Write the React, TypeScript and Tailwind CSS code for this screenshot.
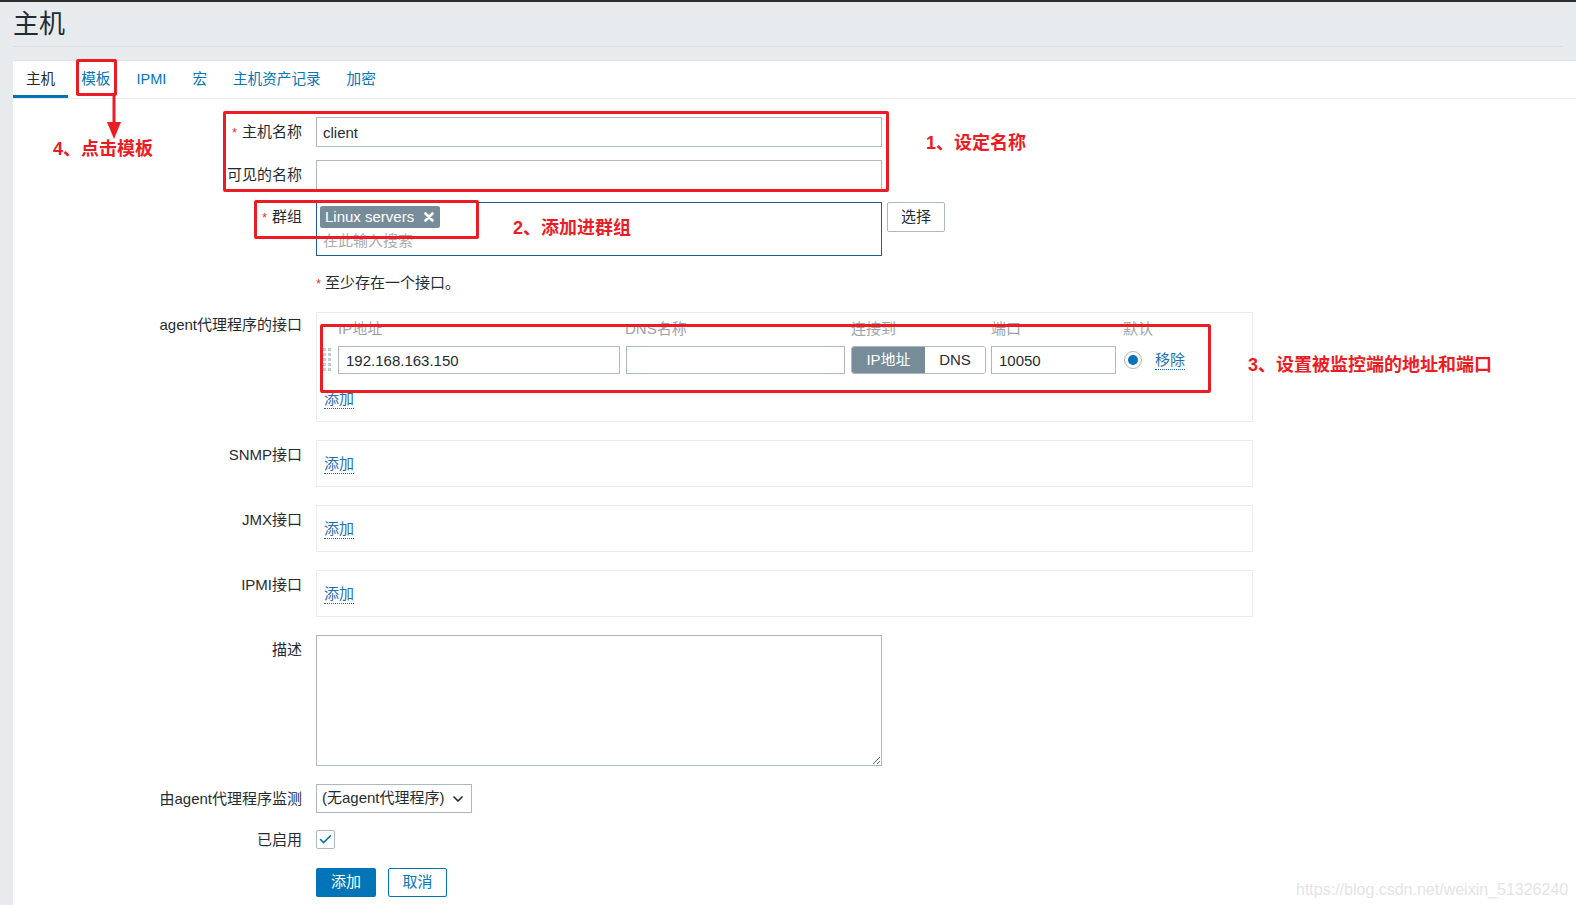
import { Check, ChevronDown } from "lucide-react"

const FONT = { fontFamily: '"Liberation Sans", "Noto Sans CJK SC", sans-serif' }

const tabs = ["主机", "模板", "IPMI", "宏", "主机资产记录", "加密"]

const AddLink = ({ className = "" }: { className?: string }) => (
    <span className={`inline-block text-[15px] leading-[19px] text-[#1f6fb3] border-b border-dotted border-[#1f6fb3] ${className}`}>
        添加
    </span>
)

const Label = ({ text, required, lh = "leading-[30px]" }: { text: string; required?: boolean; lh?: string }) => (
    <div className={`w-[289px] shrink-0 text-right text-[15px] ${lh} text-[#1f2c33]`}>
        {required && <span className="text-[#e33734] mr-[5px] text-[13px]">*</span>}
        {text}
    </div>
)

const DragHandle = () => (
    <svg width="8" height="24" viewBox="0 0 8 24" className="shrink-0">
        {[0, 5, 10, 15, 20].map((y) => (
            <g key={y} fill="#c3ccd2">
                <rect x="0" y={y} width="3" height="3" />
                <rect x="5" y={y} width="3" height="3" />
            </g>
        ))}
    </svg>
)

const EmptyIface = ({ label }: { label: string }) => (
    <div className="flex mt-[18px]">
        <Label text={label} />
        <div className="ml-[14px] w-[937px] h-[47px] border border-[#ebebeb] pl-[7px] pt-[12px]">
            <AddLink />
        </div>
    </div>
)

// red annotation overlays
const RedBox = ({ className }: { className: string }) => (
    <div className={`absolute border-[3px] border-[#ec1c24] rounded-[2px] pointer-events-none ${className}`} />
)

const Note = ({ text, className }: { text: string; className: string }) => (
    <div className={`absolute text-[18px] font-bold leading-[22px] text-[#ec1c24] whitespace-nowrap ${className}`}>{text}</div>
)

export default function App() {
    return (
        <div className="relative w-[1576px] h-[905px] overflow-hidden bg-[#e8ebee] border-t-2 border-[#2b2b2b]" style={FONT}>
            {/* page title */}
            <div className="mx-[13px] h-[45px] border-b border-[#dcdfe2] flex items-center">
                <h1 className="text-[26px] leading-[30px] text-[#1f2c33]">主机</h1>
            </div>

            <div className="mt-[13px] ml-[13px] bg-white border-t border-[#dfe3e6] h-[900px]">
                {/* tabs */}
                <div className="flex h-[38px] border-b border-[#ebebeb]">
                    {tabs.map((t, i) => (
                        <div
                            key={t}
                            className={`px-[13px] h-full flex items-center text-[14.6px] ${
                                i === 0 ? "text-[#1f2c33] border-b-[3px] border-[#0275b8] pt-[4px]" : "text-[#0275b8] pt-[1px]"
                            }`}
                        >
                            {t}
                        </div>
                    ))}
                </div>

                {/* form */}
                <div className="pt-[18px] text-[15px] text-[#1f2c33]">
                    <div className="flex">
                        <Label text="主机名称" required />
                        <input
                            readOnly
                            defaultValue="client"
                            className="ml-[14px] w-[566px] h-[30px] border border-[#acb8c0] px-[6px] text-[15px] text-[#1f2c33] outline-none"
                        />
                    </div>
                    <div className="flex mt-[12px]">
                        <Label text="可见的名称" />
                        <input readOnly className="ml-[14px] w-[566px] h-[30px] border border-[#acb8c0] px-[6px] outline-none" />
                    </div>
                    <div className="flex mt-[12px]">
                        <Label text="群组" required />
                        <div className="ml-[14px] w-[566px] h-[54px] border border-[#1f5f98] pl-[3px] pt-[3px]">
                            <div className="inline-flex items-center h-[22px] bg-[#768d99] text-white rounded-[2px] pl-[5px] pr-[6px] text-[15px]">
                                Linux servers
                                <svg width="10" height="10" viewBox="0 0 10 10" className="ml-[10px]">
                                    <path d="M1.5 1.5 L8.5 8.5 M8.5 1.5 L1.5 8.5" stroke="white" strokeWidth="2.6" strokeLinecap="round" />
                                </svg>
                            </div>
                            <div className="mt-[2px] pl-[3px] leading-[20px] text-[#a8adb1]">在此输入搜索</div>
                        </div>
                        <button className="ml-[5px] h-[30px] w-[58px] border border-[#acb8c0] rounded-[2px] bg-white text-[15px] text-[#1f2c33]">
                            选择
                        </button>
                    </div>
                    <div className="flex mt-[15px] h-[24px] leading-[24px]">
                        <div className="w-[289px] shrink-0" />
                        <div className="ml-[14px]">
                            <span className="text-[#e33734] text-[13px] mr-[4px]">*</span>至少存在一个接口。
                        </div>
                    </div>

                    {/* agent interface */}
                    <div className="flex mt-[17px]">
                        <Label text="agent代理程序的接口" lh="leading-[26px]" />
                        <div className="ml-[14px] w-[937px] h-[110px] border border-[#ebebeb] pl-[6px] pt-[7px]">
                            <div className="flex h-[18px] leading-[18px] text-[#9aa3a8]">
                                <div className="ml-[15px] w-[287px]">IP地址</div>
                                <div className="w-[226px]">DNS名称</div>
                                <div className="w-[140px]">连接到</div>
                                <div className="w-[132px]">端口</div>
                                <div>默认</div>
                            </div>
                            <div className="flex items-center mt-[8px] h-[28px]">
                                <DragHandle />
                                <input
                                    readOnly
                                    defaultValue="192.168.163.150"
                                    className="ml-[7px] w-[282px] h-[28px] border border-[#acb8c0] px-[7px] outline-none"
                                />
                                <input readOnly className="ml-[6px] w-[219px] h-[28px] border border-[#acb8c0] outline-none" />
                                <div className="ml-[6px] flex h-[28px] border border-[#acb8c0] rounded-[3px] overflow-hidden">
                                    <div className="w-[73px] bg-[#768d99] text-white flex items-center justify-center">IP地址</div>
                                    <div className="w-[60px] bg-white flex items-center justify-center">DNS</div>
                                </div>
                                <input
                                    readOnly
                                    defaultValue="10050"
                                    className="ml-[5px] w-[125px] h-[28px] border border-[#acb8c0] px-[7px] outline-none"
                                />
                                <div className="ml-[8px] w-[18px] h-[18px] rounded-full border border-[#acb8c0] flex items-center justify-center">
                                    <div className="w-[10px] h-[10px] rounded-full bg-[#0275b8]" />
                                </div>
                                <span className="ml-[13px] leading-[19px] text-[#1f6fb3] border-b border-dotted border-[#1f6fb3]">移除</span>
                            </div>
                            <AddLink className="mt-[15px] ml-[1px]" />
                        </div>
                    </div>

                    <EmptyIface label="SNMP接口" />
                    <EmptyIface label="JMX接口" />
                    <EmptyIface label="IPMI接口" />

                    <div className="flex mt-[18px]">
                        <Label text="描述" />
                        <textarea readOnly className="ml-[14px] w-[566px] h-[131px] border border-[#acb8c0] outline-none" />
                    </div>
                    <div className="flex mt-[18px]">
                        <Label text="由agent代理程序监测" lh="leading-[29px]" />
                        <div className="ml-[14px] w-[156px] h-[29px] border border-[#acb8c0] flex items-center pl-[5px] pr-[5px] justify-between">
                            <span>(无agent代理程序)</span>
                            <ChevronDown size={16} strokeWidth={2.6} className="text-[#1f2c33]" />
                        </div>
                    </div>
                    <div className="flex mt-[17px]">
                        <Label text="已启用" lh="leading-[20px]" />
                        <div className="ml-[14px] w-[19px] h-[19px] border border-[#acb8c0] rounded-[2px] flex items-center justify-center">
                            <Check size={15} strokeWidth={2.5} className="text-[#0275b8]" />
                        </div>
                    </div>
                    <div className="flex mt-[18px]">
                        <div className="w-[289px] shrink-0" />
                        <button className="ml-[14px] w-[60px] h-[29px] bg-[#0275b8] text-white rounded-[2px] text-[15px]">添加</button>
                        <button className="ml-[12px] w-[59px] h-[29px] bg-white text-[#0275b8] border border-[#0275b8] rounded-[2px] text-[15px]">
                            取消
                        </button>
                    </div>
                </div>
            </div>

            {/* annotations */}
            <RedBox className="left-[76px] top-[57px] w-[41px] h-[37px]" />
            <svg className="absolute left-[106px] top-[92px]" width="16" height="46" viewBox="0 0 16 46">
                <line x1="8" y1="0" x2="8" y2="32" stroke="#ec1c24" strokeWidth="3" />
                <polygon points="1,28 15,28 8,45" fill="#ec1c24" />
            </svg>
            <Note text="4、点击模板" className="left-[53px] top-[136px]" />

            <RedBox className="left-[223px] top-[109px] w-[666px] h-[81px]" />
            <Note text="1、设定名称" className="left-[926px] top-[130px]" />

            <RedBox className="left-[254px] top-[198px] w-[225px] h-[39px]" />
            <Note text="2、添加进群组" className="left-[513px] top-[215px]" />

            <RedBox className="left-[320px] top-[322px] w-[891px] h-[69px]" />
            <Note text="3、设置被监控端的地址和端口" className="left-[1248px] top-[352px]" />

            <div className="absolute left-[1296px] top-[876px] text-[16px] text-[#e4e4e4] whitespace-nowrap">
                https://blog.csdn.net/weixin_51326240
            </div>
        </div>
    )
}
